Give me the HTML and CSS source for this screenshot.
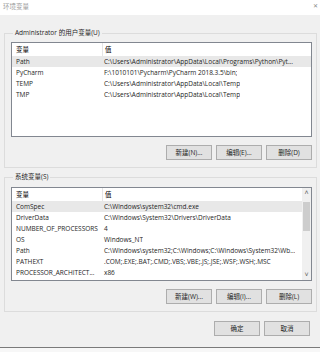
FILE: index.html
```html
<!DOCTYPE html>
<html>
<head>
  <title>环境变量</title>
  <link rel="stylesheet" href="styles.css">
</head>
<body>
  <div class="window">
    <div class="titlebar">
      <span class="title">环境变量</span>
      <span class="close">✕</span>
    </div>
    <div class="content">
      <fieldset class="group user">
        <legend>Administrator 的用户变量(U)</legend>
        <div class="list">
          <div class="rows">
            <div class="row head"><div class="name">变量</div><div class="value">值</div></div>
            <div class="row selected"><div class="name">Path</div><div class="value">C:\Users\Administrator\AppData\Local\Programs\Python\Pyt...</div></div>
            <div class="row"><div class="name">PyCharm</div><div class="value">F:\1010101\Pycharm\PyCharm 2018.3.5\bin;</div></div>
            <div class="row"><div class="name">TEMP</div><div class="value">C:\Users\Administrator\AppData\Local\Temp</div></div>
            <div class="row"><div class="name">TMP</div><div class="value">C:\Users\Administrator\AppData\Local\Temp</div></div>
          </div>
        </div>
        <div class="buttons">
          <div class="btn">新建(N)...</div>
          <div class="btn">编辑(E)...</div>
          <div class="btn">删除(D)</div>
        </div>
      </fieldset>

      <fieldset class="group system">
        <legend>系统变量(S)</legend>
        <div class="list">
          <div class="rows">
            <div class="row head"><div class="name">变量</div><div class="value">值</div></div>
            <div class="row selected"><div class="name">ComSpec</div><div class="value">C:\Windows\system32\cmd.exe</div></div>
            <div class="row"><div class="name">DriverData</div><div class="value">C:\Windows\System32\Drivers\DriverData</div></div>
            <div class="row"><div class="name">NUMBER_OF_PROCESSORS</div><div class="value">4</div></div>
            <div class="row"><div class="name">OS</div><div class="value">Windows_NT</div></div>
            <div class="row"><div class="name">Path</div><div class="value">C:\Windows\system32;C:\Windows;C:\Windows\System32\Wb...</div></div>
            <div class="row"><div class="name">PATHEXT</div><div class="value">.COM;.EXE;.BAT;.CMD;.VBS;.VBE;.JS;.JSE;.WSF;.WSH;.MSC</div></div>
            <div class="row"><div class="name">PROCESSOR_ARCHITECT...</div><div class="value">x86</div></div>
          </div>
          <div class="scrollbar">
            <div class="arrow">&#x2C4;</div>
            <div class="track"><div class="thumb"></div></div>
            <div class="arrow">&#x2C5;</div>
          </div>
        </div>
        <div class="buttons">
          <div class="btn">新建(W)...</div>
          <div class="btn">编辑(I)...</div>
          <div class="btn">删除(L)</div>
        </div>
      </fieldset>

      <div class="footer">
        <div class="btn">确定</div>
        <div class="btn">取消</div>
      </div>
    </div>
  </div>
</body>
</html>
```

FILE: styles.css
```css
html {
  background: #f7f7f7;
}
body {
  margin: 0;
  font-family: "Open Sans", "Noto Sans CJK SC", sans-serif;
  font-size: 6.5px;
  color: #1e1e1e;
}
.window {
  width: 320px;
  height: 347px;
  background: #f0f0f0;
  border-bottom: 1px solid #7a7a7a;
  box-shadow: 0 1px 2px rgba(0, 0, 0, 0.15);
}
.titlebar {
  height: 15px;
  background: #fff;
  display: flex;
  align-items: center;
  justify-content: space-between;
  padding: 0 2px 3px 3px;
  box-sizing: border-box;
  color: #9a9a9a;
}
.close {
  font-size: 6px;
  color: #8a8a8a;
}
.content {
  display: flex;
  flex-direction: column;
}
.group {
  margin: 13px 3px 0 4px;
  padding: 4px 4px 7px 6px;
  border: 1px solid #dcdcdc;
  min-width: 0;
}
.group legend {
  padding: 0 2px;
  margin-left: 2px;
  line-height: 10px;
  height: 10px;
}
.system {
  margin-top: 4px;
  padding-top: 5px;
}
.list {
  background: #fff;
  border: 1px solid #828790;
  display: flex;
}
.user .list {
  height: 93px;
}
.system .list {
  height: 92px;
}
.rows {
  flex: 1;
  min-width: 0;
}
.row {
  display: flex;
  height: 11px;
  line-height: 11px;
  white-space: nowrap;
}
.row.head {
  height: 13px;
  line-height: 13px;
  color: #000;
}
.row.selected {
  background: #e8e8e8;
}
.name {
  width: 86px;
  padding-left: 4px;
  overflow: hidden;
  flex-shrink: 0;
}
.value {
  padding-left: 2px;
  overflow: hidden;
}
.head .value {
  border-left: 1px solid #e5e5e5;
}
.scrollbar {
  width: 9px;
  background: #f0f0f0;
  display: flex;
  flex-direction: column;
}
.arrow {
  height: 10px;
  line-height: 10px;
  text-align: center;
  font-size: 7px;
  color: #606060;
}
.track {
  flex: 1;
  padding-top: 4px;
}
.thumb {
  margin: 0 1px;
  height: 29px;
  background: #cdcdcd;
}
.buttons {
  display: flex;
  justify-content: flex-end;
  gap: 4px;
  margin-top: 8px;
}
.btn {
  width: 44px;
  height: 13px;
  line-height: 13px;
  background: #e1e1e1;
  border: 1px solid #adadad;
  text-align: center;
  white-space: nowrap;
}
.footer {
  display: flex;
  justify-content: flex-end;
  gap: 4px;
  margin-top: 9px;
  padding-right: 10px;
}
```
